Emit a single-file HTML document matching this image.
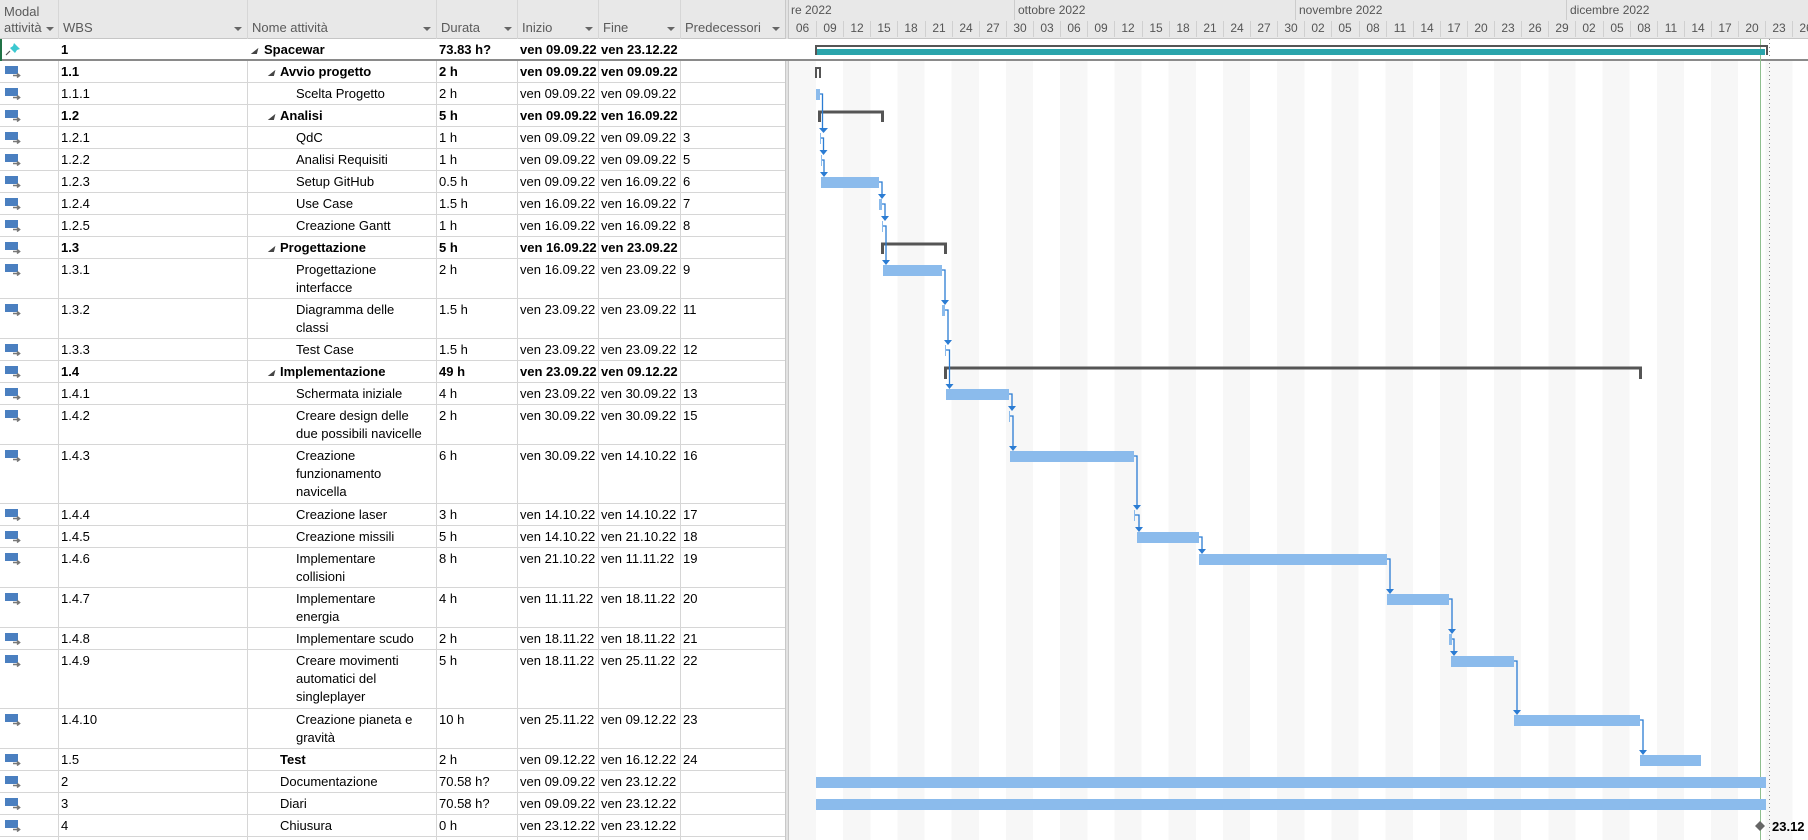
<!DOCTYPE html>
<html><head><meta charset="utf-8">
<style>
*{margin:0;padding:0;box-sizing:border-box}
body{width:1808px;height:840px;overflow:hidden;background:#fff;font-family:"Liberation Sans",sans-serif;font-size:13px;color:#000;position:relative}
.hd{position:absolute;left:0;top:0;width:1808px;height:39px;background:#e8e8e8;border-bottom:1px solid #c6c6c6}
.ht{position:absolute;color:#5a5a5a;font-size:13px;line-height:16px}
.dd{position:absolute;top:27px;width:0;height:0;border-left:4px solid transparent;border-right:4px solid transparent;border-top:4px solid #666}
.vl{position:absolute;top:0;width:1px;height:840px;background:#d6d6d6}
.r{position:absolute;left:0;width:785px;border-bottom:1px solid #d6d6d6}
.r span{position:absolute;top:2px;line-height:18px;white-space:nowrap}
.b span{font-weight:bold}
.w{left:61px}.d{left:439px}.s{left:520px}.f{left:601px}.p{left:683px}
.n1{left:264px}.n2{left:280px}.n3{left:296px}
.tri{position:absolute;font-size:8px;color:#444;top:7px}
.ic{position:absolute;left:5px;top:5px}
.gantt{position:absolute;left:789px;top:39px;width:1019px;height:801px;background:repeating-linear-gradient(90deg,#f7f7f7 0,#f7f7f7 27.12px,#fff 27.12px,#fff 54.24px)}
.ml{position:absolute;top:3px;font-size:12px;color:#555}
.tk{position:absolute;top:21px;font-size:12px;color:#555;width:27px;text-align:center;border-left:1px solid #d0d0d0;height:16px;line-height:15px}
</style></head><body>
<div class="hd"></div>
<div class="ht" style="left:4px;top:4px;width:42px;overflow:hidden;white-space:nowrap">Modal<br>attività</div>
<div class="dd" style="left:46px"></div>
<div class="ht" style="left:63px;top:20px">WBS</div><div class="dd" style="left:234px"></div>
<div class="ht" style="left:252px;top:20px">Nome attività</div><div class="dd" style="left:423px"></div>
<div class="ht" style="left:441px;top:20px">Durata</div><div class="dd" style="left:504px"></div>
<div class="ht" style="left:522px;top:20px">Inizio</div><div class="dd" style="left:585px"></div>
<div class="ht" style="left:603px;top:20px">Fine</div><div class="dd" style="left:667px"></div>
<div class="ht" style="left:685px;top:20px">Predecessori</div><div class="dd" style="left:772px"></div>

<div class="gantt"></div>
<div style="position:absolute;left:785px;top:0;width:4px;height:840px;background:#e2e2e2;border-left:1px solid #c8c8c8;border-right:1px solid #c8c8c8"></div>
<div style="position:absolute;left:789px;top:0;width:1019px;height:39px;background:#e8e8e8;border-bottom:1px solid #c6c6c6;overflow:hidden">
<div class="ml" style="left:2px">re 2022</div>
<div style="position:absolute;left:225px;top:0;width:1px;height:20px;background:#ccc"></div><div class="ml" style="left:229px">ottobre 2022</div>
<div style="position:absolute;left:506px;top:0;width:1px;height:20px;background:#ccc"></div><div class="ml" style="left:510px">novembre 2022</div>
<div style="position:absolute;left:777px;top:0;width:1px;height:20px;background:#ccc"></div><div class="ml" style="left:781px">dicembre 2022</div>
<div class="tk" style="left:0px;border:none">06</div><div class="tk" style="left:27px">09</div><div class="tk" style="left:54px">12</div><div class="tk" style="left:81px">15</div><div class="tk" style="left:108px">18</div><div class="tk" style="left:136px">21</div><div class="tk" style="left:163px">24</div><div class="tk" style="left:190px">27</div><div class="tk" style="left:217px">30</div><div class="tk" style="left:244px">03</div><div class="tk" style="left:271px">06</div><div class="tk" style="left:298px">09</div><div class="tk" style="left:325px">12</div><div class="tk" style="left:353px">15</div><div class="tk" style="left:380px">18</div><div class="tk" style="left:407px">21</div><div class="tk" style="left:434px">24</div><div class="tk" style="left:461px">27</div><div class="tk" style="left:488px">30</div><div class="tk" style="left:515px">02</div><div class="tk" style="left:542px">05</div><div class="tk" style="left:570px">08</div><div class="tk" style="left:597px">11</div><div class="tk" style="left:624px">14</div><div class="tk" style="left:651px">17</div><div class="tk" style="left:678px">20</div><div class="tk" style="left:705px">23</div><div class="tk" style="left:732px">26</div><div class="tk" style="left:759px">29</div><div class="tk" style="left:786px">02</div><div class="tk" style="left:814px">05</div><div class="tk" style="left:841px">08</div><div class="tk" style="left:868px">11</div><div class="tk" style="left:895px">14</div><div class="tk" style="left:922px">17</div><div class="tk" style="left:949px">20</div><div class="tk" style="left:976px">23</div><div class="tk" style="left:1003px">26</div>
</div>

<div class="vl" style="left:58px"></div><div class="vl" style="left:247px"></div><div class="vl" style="left:436px"></div><div class="vl" style="left:517px"></div><div class="vl" style="left:598px"></div><div class="vl" style="left:680px"></div>

<svg width="0" height="0" style="position:absolute"><defs><g id="ti"><rect x="0" y="0" width="13" height="8" fill="#4a7fc0"/><path d="M8 9.5h6M12 7.5l2.5 2-2.5 2" stroke="#777" stroke-width="1.6" fill="none"/></g></defs></svg>

<div class="r b" style="top:39px;height:22px;background:#fff;border-bottom:2px solid #8a8a8a;width:1808px"><svg class="ic" width="18" height="14" style="top:3px"><path d="M9 1l6 6-3 1-2 3-5-5 3-2z" fill="#3cc8d0"/><path d="M5 9l-4 4" stroke="#555" stroke-width="1.2"/></svg><span class="w">1</span><i class="tri" style="left:251px">◢</i><span class="n1">Spacewar</span><span class="d">73.83 h?</span><span class="s">ven 09.09.22</span><span class="f">ven 23.12.22</span></div>
<div style="position:absolute;left:0;top:39px;width:2px;height:22px;background:#217346"></div>

<div class="r b" style="top:61px;height:22px"><svg class="ic" width="16" height="12"><use href="#ti"/></svg><span class="w">1.1</span><i class="tri" style="left:268px">◢</i><span class="n2">Avvio progetto</span><span class="d">2 h</span><span class="s">ven 09.09.22</span><span class="f">ven 09.09.22</span></div>
<div class="r" style="top:83px;height:22px"><svg class="ic" width="16" height="12"><use href="#ti"/></svg><span class="w">1.1.1</span><span class="n3">Scelta Progetto</span><span class="d">2 h</span><span class="s">ven 09.09.22</span><span class="f">ven 09.09.22</span></div>
<div class="r b" style="top:105px;height:22px"><svg class="ic" width="16" height="12"><use href="#ti"/></svg><span class="w">1.2</span><i class="tri" style="left:268px">◢</i><span class="n2">Analisi</span><span class="d">5 h</span><span class="s">ven 09.09.22</span><span class="f">ven 16.09.22</span></div>
<div class="r" style="top:127px;height:22px"><svg class="ic" width="16" height="12"><use href="#ti"/></svg><span class="w">1.2.1</span><span class="n3">QdC</span><span class="d">1 h</span><span class="s">ven 09.09.22</span><span class="f">ven 09.09.22</span><span class="p">3</span></div>
<div class="r" style="top:149px;height:22px"><svg class="ic" width="16" height="12"><use href="#ti"/></svg><span class="w">1.2.2</span><span class="n3">Analisi Requisiti</span><span class="d">1 h</span><span class="s">ven 09.09.22</span><span class="f">ven 09.09.22</span><span class="p">5</span></div>
<div class="r" style="top:171px;height:22px"><svg class="ic" width="16" height="12"><use href="#ti"/></svg><span class="w">1.2.3</span><span class="n3">Setup GitHub</span><span class="d">0.5 h</span><span class="s">ven 09.09.22</span><span class="f">ven 16.09.22</span><span class="p">6</span></div>
<div class="r" style="top:193px;height:22px"><svg class="ic" width="16" height="12"><use href="#ti"/></svg><span class="w">1.2.4</span><span class="n3">Use Case</span><span class="d">1.5 h</span><span class="s">ven 16.09.22</span><span class="f">ven 16.09.22</span><span class="p">7</span></div>
<div class="r" style="top:215px;height:22px"><svg class="ic" width="16" height="12"><use href="#ti"/></svg><span class="w">1.2.5</span><span class="n3">Creazione Gantt</span><span class="d">1 h</span><span class="s">ven 16.09.22</span><span class="f">ven 16.09.22</span><span class="p">8</span></div>
<div class="r b" style="top:237px;height:22px"><svg class="ic" width="16" height="12"><use href="#ti"/></svg><span class="w">1.3</span><i class="tri" style="left:268px">◢</i><span class="n2">Progettazione</span><span class="d">5 h</span><span class="s">ven 16.09.22</span><span class="f">ven 23.09.22</span></div>
<div class="r" style="top:259px;height:40px"><svg class="ic" width="16" height="12"><use href="#ti"/></svg><span class="w">1.3.1</span><span class="n3">Progettazione<br>interfacce</span><span class="d">2 h</span><span class="s">ven 16.09.22</span><span class="f">ven 23.09.22</span><span class="p">9</span></div>
<div class="r" style="top:299px;height:40px"><svg class="ic" width="16" height="12"><use href="#ti"/></svg><span class="w">1.3.2</span><span class="n3">Diagramma delle<br>classi</span><span class="d">1.5 h</span><span class="s">ven 23.09.22</span><span class="f">ven 23.09.22</span><span class="p">11</span></div>
<div class="r" style="top:339px;height:22px"><svg class="ic" width="16" height="12"><use href="#ti"/></svg><span class="w">1.3.3</span><span class="n3">Test Case</span><span class="d">1.5 h</span><span class="s">ven 23.09.22</span><span class="f">ven 23.09.22</span><span class="p">12</span></div>
<div class="r b" style="top:361px;height:22px"><svg class="ic" width="16" height="12"><use href="#ti"/></svg><span class="w">1.4</span><i class="tri" style="left:268px">◢</i><span class="n2">Implementazione</span><span class="d">49 h</span><span class="s">ven 23.09.22</span><span class="f">ven 09.12.22</span></div>
<div class="r" style="top:383px;height:22px"><svg class="ic" width="16" height="12"><use href="#ti"/></svg><span class="w">1.4.1</span><span class="n3">Schermata iniziale</span><span class="d">4 h</span><span class="s">ven 23.09.22</span><span class="f">ven 30.09.22</span><span class="p">13</span></div>
<div class="r" style="top:405px;height:40px"><svg class="ic" width="16" height="12"><use href="#ti"/></svg><span class="w">1.4.2</span><span class="n3">Creare design delle<br>due possibili navicelle</span><span class="d">2 h</span><span class="s">ven 30.09.22</span><span class="f">ven 30.09.22</span><span class="p">15</span></div>
<div class="r" style="top:445px;height:59px"><svg class="ic" width="16" height="12"><use href="#ti"/></svg><span class="w">1.4.3</span><span class="n3">Creazione<br>funzionamento<br>navicella</span><span class="d">6 h</span><span class="s">ven 30.09.22</span><span class="f">ven 14.10.22</span><span class="p">16</span></div>
<div class="r" style="top:504px;height:22px"><svg class="ic" width="16" height="12"><use href="#ti"/></svg><span class="w">1.4.4</span><span class="n3">Creazione laser</span><span class="d">3 h</span><span class="s">ven 14.10.22</span><span class="f">ven 14.10.22</span><span class="p">17</span></div>
<div class="r" style="top:526px;height:22px"><svg class="ic" width="16" height="12"><use href="#ti"/></svg><span class="w">1.4.5</span><span class="n3">Creazione missili</span><span class="d">5 h</span><span class="s">ven 14.10.22</span><span class="f">ven 21.10.22</span><span class="p">18</span></div>
<div class="r" style="top:548px;height:40px"><svg class="ic" width="16" height="12"><use href="#ti"/></svg><span class="w">1.4.6</span><span class="n3">Implementare<br>collisioni</span><span class="d">8 h</span><span class="s">ven 21.10.22</span><span class="f">ven 11.11.22</span><span class="p">19</span></div>
<div class="r" style="top:588px;height:40px"><svg class="ic" width="16" height="12"><use href="#ti"/></svg><span class="w">1.4.7</span><span class="n3">Implementare<br>energia</span><span class="d">4 h</span><span class="s">ven 11.11.22</span><span class="f">ven 18.11.22</span><span class="p">20</span></div>
<div class="r" style="top:628px;height:22px"><svg class="ic" width="16" height="12"><use href="#ti"/></svg><span class="w">1.4.8</span><span class="n3">Implementare scudo</span><span class="d">2 h</span><span class="s">ven 18.11.22</span><span class="f">ven 18.11.22</span><span class="p">21</span></div>
<div class="r" style="top:650px;height:59px"><svg class="ic" width="16" height="12"><use href="#ti"/></svg><span class="w">1.4.9</span><span class="n3">Creare movimenti<br>automatici del<br>singleplayer</span><span class="d">5 h</span><span class="s">ven 18.11.22</span><span class="f">ven 25.11.22</span><span class="p">22</span></div>
<div class="r" style="top:709px;height:40px"><svg class="ic" width="16" height="12"><use href="#ti"/></svg><span class="w">1.4.10</span><span class="n3">Creazione pianeta e<br>gravità</span><span class="d">10 h</span><span class="s">ven 25.11.22</span><span class="f">ven 09.12.22</span><span class="p">23</span></div>
<div class="r" style="top:749px;height:22px"><svg class="ic" width="16" height="12"><use href="#ti"/></svg><span class="w">1.5</span><span class="n2" style="font-weight:bold">Test</span><span class="d">2 h</span><span class="s">ven 09.12.22</span><span class="f">ven 16.12.22</span><span class="p">24</span></div>
<div class="r" style="top:771px;height:22px"><svg class="ic" width="16" height="12"><use href="#ti"/></svg><span class="w">2</span><span class="n2">Documentazione</span><span class="d">70.58 h?</span><span class="s">ven 09.09.22</span><span class="f">ven 23.12.22</span></div>
<div class="r" style="top:793px;height:22px"><svg class="ic" width="16" height="12"><use href="#ti"/></svg><span class="w">3</span><span class="n2">Diari</span><span class="d">70.58 h?</span><span class="s">ven 09.09.22</span><span class="f">ven 23.12.22</span></div>
<div class="r" style="top:815px;height:22px"><svg class="ic" width="16" height="12"><use href="#ti"/></svg><span class="w">4</span><span class="n2">Chiusura</span><span class="d">0 h</span><span class="s">ven 23.12.22</span><span class="f">ven 23.12.22</span></div>

<svg style="position:absolute;left:0;top:0" width="1808" height="840">
<line x1="1760.5" y1="39" x2="1760.5" y2="840" stroke="#8fbf8f" stroke-width="1"/>
<line x1="1769.5" y1="39" x2="1769.5" y2="840" stroke="#888" stroke-width="1" stroke-dasharray="1,3"/>
<path d="M816 55V46H1767V55" stroke="#555" stroke-width="2" fill="none"/>
<rect x="817" y="49" width="948" height="6" fill="#2aa4ab"/>
<path d="M816 78V68H820V78" stroke="#555" stroke-width="2" fill="none"/>
<path d="M819.5 122V112H882.5V122" stroke="#555" stroke-width="3" fill="none"/>
<path d="M882.5 254V244H945.5V254" stroke="#555" stroke-width="3" fill="none"/>
<path d="M945.5 379V368H1640.5V379" stroke="#555" stroke-width="3" fill="none"/>
<g fill="#8bbbec">
<rect x="816" y="89" width="4" height="11"/>
<rect x="820" y="133" width="1" height="11"/>
<rect x="821" y="155" width="1" height="11"/>
<rect x="821" y="177" width="58" height="11"/>
<rect x="879" y="199" width="3" height="11"/>
<rect x="882" y="221" width="1" height="11"/>
<rect x="883" y="265" width="59" height="11"/>
<rect x="942" y="305" width="3" height="11"/>
<rect x="945" y="345" width="1" height="11"/>
<rect x="946" y="389" width="63" height="11"/>
<rect x="1009" y="411" width="1" height="11"/>
<rect x="1010" y="451" width="124" height="11"/>
<rect x="1134" y="510" width="1" height="11"/>
<rect x="1137" y="532" width="62" height="11"/>
<rect x="1199" y="554" width="188" height="11"/>
<rect x="1387" y="594" width="62" height="11"/>
<rect x="1449" y="634" width="3" height="11"/>
<rect x="1451" y="656" width="63" height="11"/>
<rect x="1514" y="715" width="126" height="11"/>
<rect x="1640" y="755" width="61" height="11"/>
<rect x="816" y="777" width="950" height="11"/>
<rect x="816" y="799" width="950" height="11"/>
</g>
<g stroke="#2b7cd3" stroke-width="1.3" fill="none">
<path d="M820 94h2.5V129"/><path d="M821 138h2.5V151"/><path d="M822 160h2V173"/>
<path d="M879 182h3V195"/><path d="M882 204h3V217"/><path d="M883 226h3V261"/>
<path d="M942 270h3V301"/><path d="M945 310h3V341"/><path d="M946 350h3.5V385"/>
<path d="M1009 394h3V407"/><path d="M1010 416h3V447"/><path d="M1134 456h3V506"/>
<path d="M1135 515h4V528"/><path d="M1199 537h3V550"/><path d="M1387 559h3V590"/>
<path d="M1449 599h3V630"/><path d="M1452 639h2V652"/><path d="M1514 661h3V711"/>
<path d="M1640 720h3V751"/>
</g>
<g fill="#2b7cd3">
<path d="M819 128h9l-4.5 5z"/><path d="M819.5 150h8l-4 5z"/><path d="M820 172h8l-4 5z"/>
<path d="M878 194h8l-4 5z"/><path d="M881 216h8l-4 5z"/><path d="M882 260h8l-4 5z"/>
<path d="M941 300h8l-4 5z"/><path d="M944 340h8l-4 5z"/><path d="M945.5 384h8l-4 5z"/>
<path d="M1008 406h8l-4 5z"/><path d="M1009 446h8l-4 5z"/><path d="M1133 505h8l-4 5z"/>
<path d="M1135 527h8l-4 5z"/><path d="M1198 549h8l-4 5z"/><path d="M1386 589h8l-4 5z"/>
<path d="M1448 629h8l-4 5z"/><path d="M1450 651h8l-4 5z"/><path d="M1513 710h8l-4 5z"/>
<path d="M1639 750h8l-4 5z"/>
</g>
<path d="M1760 821l5 5-5 5-5-5z" fill="#666"/>
<text x="1772" y="831" font-family="Liberation Sans" font-weight="bold" font-size="13">23.12</text>
</svg>
</body></html>
